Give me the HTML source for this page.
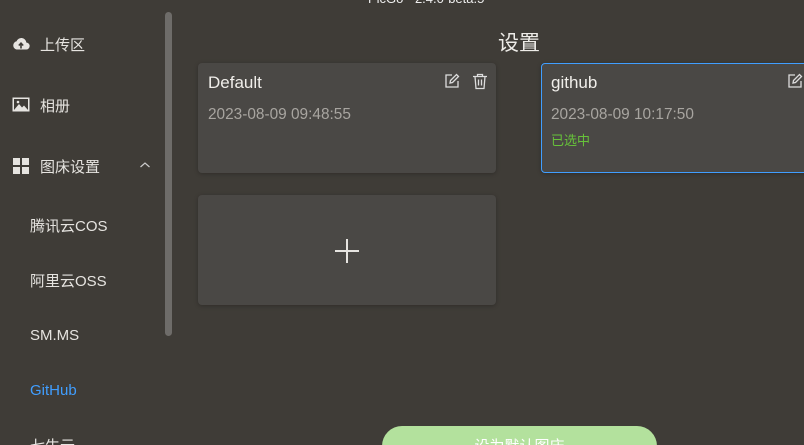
<!DOCTYPE html>
<html><head><meta charset="utf-8"><style>
*{margin:0;padding:0;box-sizing:border-box}
html,body{width:804px;height:445px;overflow:hidden}
body{background:#3f3c37;font-family:"Liberation Sans","Noto Sans CJK SC",sans-serif;color:#e8e6e3;position:relative}
.a{position:absolute}
.nav{font-size:15px;color:#e6e4e0}
.card{position:absolute;background:#4a4845;border-radius:4px;box-shadow:0 1px 4px rgba(0,0,0,.25)}
.name{position:absolute;left:10px;top:10px;font-size:17px;color:#f0eeea}
.date{position:absolute;left:10px;top:43px;font-size:15.4px;color:#a8a5a0}
</style></head><body>
<div class="a" style="left:368px;top:-9px;font-size:13px;color:#eee">PicGo - 2.4.0-beta.5</div>
<svg class="a" style="left:12px;top:36px" width="18" height="16" viewBox="0 0 18 16"><path d="M4.5 13.5h9.5a3.5 3.5 0 0 0 .3-7A5 5 0 0 0 4.6 5.3 4.2 4.2 0 0 0 4.5 13.5z" fill="#e6e4e0"/><path d="M9 12.5V7.5M6.8 9.5 9 7.2l2.2 2.3" stroke="#3f3c37" stroke-width="1.6" fill="none"/></svg>
<div class="a nav" style="left:40px;top:34px">上传区</div>
<svg class="a" style="left:12px;top:97px" width="18" height="15" viewBox="0 0 18 15"><rect x="0.5" y="0.5" width="17" height="14" fill="#e6e4e0"/><rect x="2" y="2" width="14" height="11" fill="#3f3c37"/><path d="M2 13 7 7l3 3.5 2-2 4 4.5z" fill="#e6e4e0"/><circle cx="6" cy="5" r="1.3" fill="#e6e4e0"/></svg>
<div class="a nav" style="left:40px;top:95px">相册</div>
<svg class="a" style="left:13px;top:158px" width="16" height="16"><rect x="0" y="0" width="7" height="7" fill="#e6e4e0"/><rect x="9" y="0" width="7" height="7" fill="#e6e4e0"/><rect x="0" y="9" width="7" height="7" fill="#e6e4e0"/><rect x="9" y="9" width="7" height="7" fill="#e6e4e0"/></svg>
<div class="a nav" style="left:40px;top:156px">图床设置</div>
<svg class="a" style="left:139px;top:161px" width="12" height="8"><path d="M1.5 6 6 2l4.5 4" stroke="#ccc" fill="none" stroke-width="1.2"/></svg>
<div class="a nav" style="left:30px;top:215px">腾讯云COS</div>
<div class="a nav" style="left:30px;top:270px">阿里云OSS</div>
<div class="a nav" style="left:30px;top:327px">SM.MS</div>
<div class="a nav" style="left:30px;top:382px;color:#409eff">GitHub</div>
<div class="a nav" style="left:30px;top:435px">七牛云</div>
<div class="a" style="left:165px;top:12px;width:7px;height:324px;border-radius:4px;background:#6e6c69"></div>
<div class="a" style="left:498px;top:27px;font-size:21px;color:#eeece8">设置</div>
<div class="card" style="left:198px;top:63px;width:298px;height:110px">
 <div class="name">Default</div>
 <div class="date">2023-08-09 09:48:55</div>
 <svg class="a" style="left:246px;top:10px" width="16" height="16" viewBox="0 0 16 16"><path d="M8 2H2v12h12V8" stroke="#ddd" stroke-width="1.3" fill="none"/><path d="M6 10l.5-2.5L12.5 1.5l2 2-6 6z" stroke="#ddd" stroke-width="1.3" fill="none"/></svg>
 <svg class="a" style="left:274px;top:10px" width="16" height="17" viewBox="0 0 16 17"><path d="M1 3.5h14M5.5 3.5V1.5h5v2M3 3.5l1 12h8l1-12M6.5 6.5v6M9.5 6.5v6" stroke="#ddd" stroke-width="1.3" fill="none"/></svg>
</div>
<div class="card" style="left:541px;top:63px;width:280px;height:110px;border:1px solid #409eff">
 <div class="name" style="left:9px;top:9px">github</div>
 <div class="date" style="left:9px;top:42px">2023-08-09 10:17:50</div>
 <div class="a" style="left:9px;top:66px;font-size:13px;color:#67c23a">已选中</div>
 <svg class="a" style="left:245px;top:9px" width="16" height="16" viewBox="0 0 16 16"><path d="M8 2H2v12h12V8" stroke="#ddd" stroke-width="1.3" fill="none"/><path d="M6 10l.5-2.5L12.5 1.5l2 2-6 6z" stroke="#ddd" stroke-width="1.3" fill="none"/></svg>
</div>
<div class="card" style="left:198px;top:195px;width:298px;height:110px">
 <svg class="a" style="left:135px;top:42px" width="28" height="28"><path d="M14 2v24M2 14h24" stroke="#e6e4e0" stroke-width="2"/></svg>
</div>
<div class="a" style="left:382px;top:426px;width:275px;height:40px;border-radius:20px;background:#b3e19d;color:#fff;font-size:15px;text-align:center;padding-top:9px">设为默认图床</div>
</body></html>
